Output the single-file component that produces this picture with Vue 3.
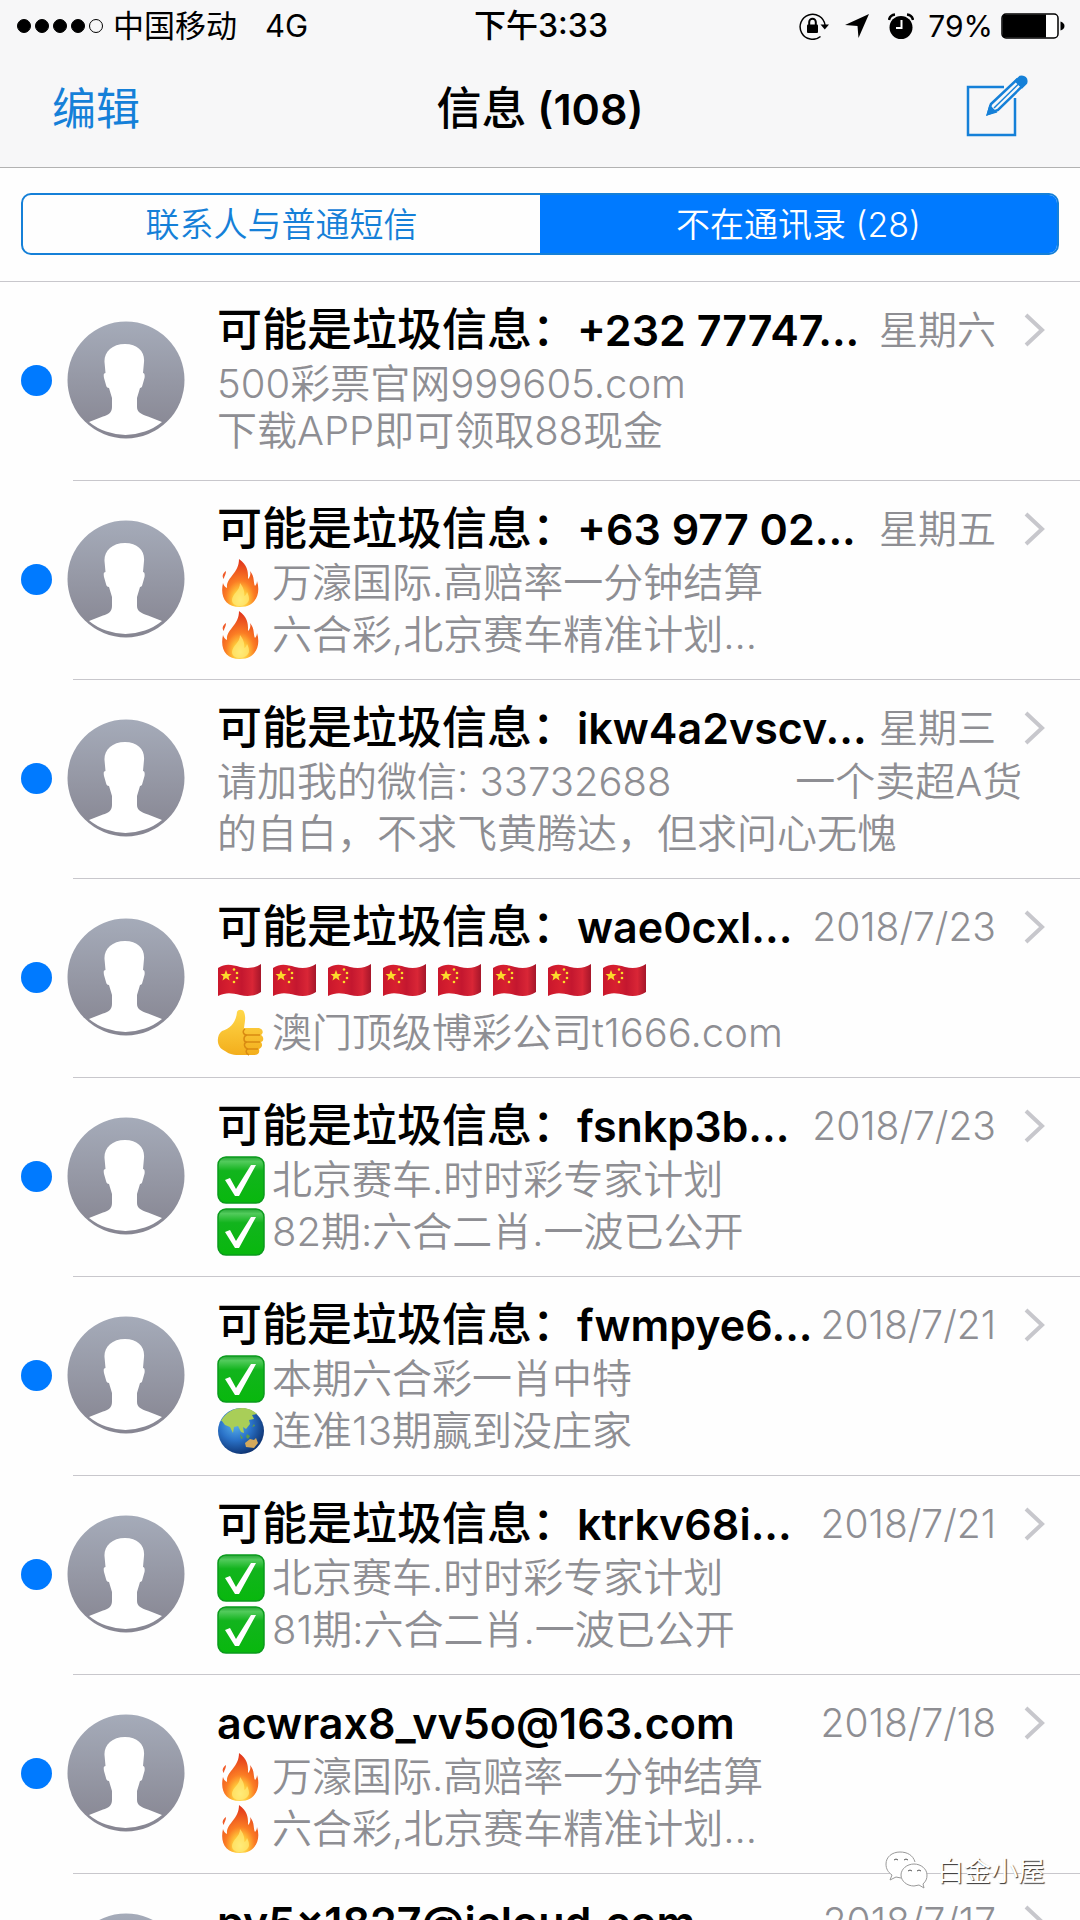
<template>
  <div class="phone">
    <header class="top">
      <div class="status">
        <div class="status-side">
          <span class="signal">
            <i v-for="n in 5" :key="n" class="signal-dot" :class="{ empty: n === 5 }"></i>
          </span>
          <span class="carrier">中国移动</span>
          <span>4G</span>
        </div>
        <time class="clock">下午3:33</time>
        <div class="status-side status-right">
          <svg class="ic-lock" viewBox="0 0 30 28">
            <path d="M21.500 24.500A12.500 12.500 0 1 1 26 13" fill="none" stroke="#000" stroke-width="1.500" />
            <path d="M21.500 12.500h8.500l-4.200 5z" />
            <rect x="8" y="12.500" width="11" height="8.500" rx="1" />
            <path d="M10.200 13v-3a3.300 3.300 0 0 1 6.600 0v3" fill="none" stroke="#000" stroke-width="2" />
          </svg>
          <svg class="ic-arrow" viewBox="0 0 24 24">
            <path d="M24 0L13.500 24L12.500 12L0 11z" />
          </svg>
          <svg class="ic-alarm" viewBox="0 0 26 26">
            <circle cx="13" cy="14.500" r="11.500" />
            <path d="M1 7Q2 2 7 1.500M25 7Q24 2 19 1.500" fill="none" stroke="#000" stroke-width="2.500" />
            <path d="M13.500 7v8H8" fill="none" stroke="#fff" stroke-width="2" />
          </svg>
          <span class="percent">79%</span>
          <svg class="ic-battery" viewBox="0 0 64 26">
            <rect x="1" y="1" width="56" height="24" rx="4" fill="#fff" stroke="#000" stroke-width="1.500" />
            <path d="M4 1.500h41v23H4q-2.500 0-2.500-2.500v-18q0-2.500 2.500-2.500z" />
            <path d="M59.500 8.500q4 1.500 4 4.500t-4 4.500z" />
          </svg>
        </div>
      </div>
      <nav class="nav">
        <button class="edit">编辑</button>
        <h1><span class="cjk">信息</span> (108)</h1>
        <button class="compose" aria-label="新信息">
          <svg viewBox="0 0 62 62">
            <path d="M38 12H2v48h47V23" />
            <path d="M22 39l3-10L51 4.500l6 6L32 35z" />
            <path d="M28 33L53 8.500" stroke-width="1.500" />
            <path d="M50 6l4-4q3-1 5 1t1 5l-4 4z" class="solid" />
            <path d="M22 39l2-7l5 5z" class="solid" />
          </svg>
        </button>
      </nav>
    </header>

    <div class="filter">
      <div class="segments">
        <button
          v-for="(tab, i) in tabs"
          :key="tab"
          class="segment"
          :class="{ active: i === activeTab }"
          @click="activeTab = i"
        >
          {{ tab }}
        </button>
      </div>
    </div>

    <ul class="list">
      <li v-for="msg in messages" :key="msg.from" class="row">
        <i class="unread"></i>
        <svg class="avatar" viewBox="0 0 118 118">
          <defs>
            <linearGradient id="avatar-fill" x1="0" y1="0" x2="0" y2="1">
              <stop offset="0" stop-color="#a5abb9" />
              <stop offset="1" stop-color="#868591" />
            </linearGradient>
          </defs>
          <circle cx="59" cy="59" r="58.500" fill="url(#avatar-fill)" />
          <path
            fill="#fff"
            d="M58 24c-13 0-21 8-20.500 18l1 11c-2 0-2 2-1.500 5l2 7q.5 3 3 3l3 10v9c0 6-4 8-9 9.500l-14 5.500a58 58 0 0 0 73 0l-14-5.500c-6-2-11-4-11-9.500v-9l3-10q2 0 2.500-3l2-7c.5-3 0-5-1.500-5l1-11c1-10-6-18-19-18z"
            transform="translate(0 -1)"
          />
        </svg>
        <div class="body">
          <div class="head">
            <h2 class="from"><span v-if="msg.spam" class="cjk">可能是垃圾信息：</span>{{ msg.from }}</h2>
            <time class="date">{{ msg.date }}</time>
            <svg class="chevron" viewBox="0 0 22 34">
              <path d="M2 2l16 15L2 32" />
            </svg>
          </div>
          <div class="preview" :class="{ tight: msg.tight }">
            <p v-for="(line, i) in msg.lines" :key="i">
              <span v-for="n in line.repeat || (line.icon ? 1 : 0)" :key="n" class="emoji">
                <svg v-if="line.icon === 'fire'" viewBox="0 0 48 48">
                  <defs>
                    <radialGradient id="fire-fill" cx=".5" cy=".85" r=".8">
                      <stop offset="0" stop-color="#fff58a" />
                      <stop offset=".25" stop-color="#ffc93a" />
                      <stop offset=".5" stop-color="#fb7d24" />
                      <stop offset="1" stop-color="#e2381c" />
                    </radialGradient>
                  </defs>
                  <path fill="url(#fire-fill)" d="M22 0c10 7 9 15 9 20 2-2 3-5 2-8 5 6 3 11 5 15 1-1 2-3 2-5 4 12-1 26-17 26C8 48 3 37 6 24c1 3 2 4 4 5-1-11 12-14 12-29z" />
                  <path fill="#f05a28" d="M9 12c-4 3-4 6-2 8 0-3 2-4 2-8z" />
                  <path fill="#ffe873" opacity=".75" d="M23 24c0 8-8 11-8 17 0 4 4 6 8 6s9-3 9-7c0-3-1-5-2-7-1 3-2 4-3 4 1-5-1-9-4-13z" />
                </svg>
                <svg v-else-if="line.icon === 'flag'" viewBox="0 0 48 48">
                  <defs>
                    <linearGradient id="flag-fill">
                      <stop offset="0" stop-color="#c9172c" />
                      <stop offset=".3" stop-color="#d8202f" />
                      <stop offset=".55" stop-color="#c4172f" />
                      <stop offset=".8" stop-color="#d92636" />
                      <stop offset="1" stop-color="#a5162a" />
                    </linearGradient>
                  </defs>
                  <path fill="url(#flag-fill)" d="M1 11c8-5 14-3 22-1s15 1 21-3v28c-6 4-13 5-21 3s-14-3-22 1z" />
                  <path fill="#fbdc2b" d="M9 13l1.500 4h4l-3 2.500 1 4L9 21l-3.500 2.500 1-4-3-2.500h4z" />
                  <g fill="#fbdc2b">
                    <circle cx="17" cy="12.500" r="1.300" />
                    <circle cx="20" cy="16" r="1.300" />
                    <circle cx="20" cy="21" r="1.300" />
                    <circle cx="17" cy="25" r="1.300" />
                  </g>
                </svg>
                <svg v-else-if="line.icon === 'thumb'" viewBox="0 0 48 48">
                  <defs>
                    <linearGradient id="thumb-fill" x1="0" y1="0" x2="0" y2="1">
                      <stop offset="0" stop-color="#ffd84a" />
                      <stop offset="1" stop-color="#f3ae1c" />
                    </linearGradient>
                  </defs>
                  <path fill="url(#thumb-fill)" d="M20 3c1-3 6-3 7 0 2 5 1 9 0 16h15c4 1 5 5 2 7 3 2 3 6 0 7 2 3 1 6-2 7 1 4-1 6-5 6H22c-8 0-11-2-14-4-9-3-9-16-3-20 9-3 14-9 15-19z" />
                  <path fill="none" stroke="#d98a12" stroke-width="1.500" d="M28 20c-3 2-2 6 2 6h13M30 26c-4 1-4 7 0 7h13M30 33c-4 1-3 6 1 7h10M31 40c-3 1-2 5 1 6" />
                </svg>
                <svg v-else-if="line.icon === 'check'" viewBox="0 0 48 48">
                  <defs>
                    <linearGradient id="check-fill" x1="0" y1="0" x2="0" y2="1">
                      <stop offset="0" stop-color="#27a536" />
                      <stop offset=".1" stop-color="#52cb5c" />
                      <stop offset=".3" stop-color="#12b41d" />
                      <stop offset="1" stop-color="#08b80d" />
                    </linearGradient>
                  </defs>
                  <rect x="1" y="1" width="46" height="46" rx="8" fill="url(#check-fill)" stroke="#0a9a1c" stroke-width="1.500" />
                  <path fill="#fff" d="M8 24l5-2 6 11L34 9h5L22 40h-4z" />
                </svg>
                <svg v-else viewBox="0 0 48 48">
                  <defs>
                    <radialGradient id="globe-fill" cx=".38" cy=".35" r=".7">
                      <stop offset="0" stop-color="#5bb4ee" />
                      <stop offset=".5" stop-color="#2a72c8" />
                      <stop offset="1" stop-color="#0c2f6c" />
                    </radialGradient>
                  </defs>
                  <circle cx="24" cy="24" r="23" fill="url(#globe-fill)" />
                  <path fill="#a9ce58" d="M4 14C9 5 17 1 25 1c7 0 12 3 15 6l-5 1 2 4-5 1 1 4-4 5-3-2 1 6-3-1-3-6-4 1-1 6-3-6-5-2-3-4z" />
                  <path fill="#5d9c4d" d="M23 27l3 4-2 1zM30 27l3 2-2 3-2-2zM35 20l2-3 1 2z" />
                  <path fill="#d4a95c" d="M28 36l5-4 4 1 2-2 2 5-4 5-8-1z" />
                </svg>
              </span>
              <span v-if="line.text">{{ line.text }}</span>
            </p>
          </div>
        </div>
      </li>
    </ul>

    <div class="watermark">
      <svg viewBox="0 0 44 38">
        <path d="M30 11C28 4 22 1 15 1 7 1 1 6 1 13c0 5 2 8 6 11l-2 5 6-3 5 1" />
        <path d="M42 24c0-6-6-11-13-11s-13 5-13 11 6 11 13 11l5-1 5 3-1-4c3-3 4-5 4-9z" />
        <path d="M9 9q2-2 4 0M19 9q2-2 4 0M23 20q2-2 4 0M32 20q2-2 4 0" class="eyes" />
      </svg>
      <span>白金小屋</span>
    </div>
  </div>
</template>

<script setup>
import { ref } from 'vue'

const tabs = ['联系人与普通短信', '不在通讯录 (28)']
const activeTab = ref(1)

const messages = [
  {
    spam: true,
    from: '+232 77747...',
    date: '星期六',
    tight: true,
    lines: [{ text: '500彩票官网999605.com' }, { text: '下载APP即可领取88现金' }]
  },
  {
    spam: true,
    from: '+63 977 02...',
    date: '星期五',
    lines: [
      { icon: 'fire', text: '万濠国际.高赔率一分钟结算' },
      { icon: 'fire', text: '六合彩,北京赛车精准计划...' }
    ]
  },
  {
    spam: true,
    from: 'ikw4a2vscv...',
    date: '星期三',
    lines: [
      { text: '请加我的微信: 33732688\u00a0\u00a0\u00a0\u00a0\u00a0\u00a0\u00a0\u00a0\u00a0\u00a0\u00a0一个卖超A货' },
      { text: '的自白，不求飞黄腾达，但求问心无愧' }
    ]
  },
  {
    spam: true,
    from: 'wae0cxl...',
    date: '2018/7/23',
    lines: [{ icon: 'flag', repeat: 8 }, { icon: 'thumb', text: '澳门顶级博彩公司t1666.com' }]
  },
  {
    spam: true,
    from: 'fsnkp3b...',
    date: '2018/7/23',
    lines: [
      { icon: 'check', text: '北京赛车.时时彩专家计划' },
      { icon: 'check', text: '82期:六合二肖.一波已公开' }
    ]
  },
  {
    spam: true,
    from: 'fwmpye6...',
    date: '2018/7/21',
    lines: [
      { icon: 'check', text: '本期六合彩一肖中特' },
      { icon: 'globe', text: '连准13期赢到没庄家' }
    ]
  },
  {
    spam: true,
    from: 'ktrkv68i...',
    date: '2018/7/21',
    lines: [
      { icon: 'check', text: '北京赛车.时时彩专家计划' },
      { icon: 'check', text: '81期:六合二肖.一波已公开' }
    ]
  },
  {
    from: 'acwrax8_vv5o@163.com',
    date: '2018/7/18',
    lines: [
      { icon: 'fire', text: '万濠国际.高赔率一分钟结算' },
      { icon: 'fire', text: '六合彩,北京赛车精准计划...' }
    ]
  },
  {
    from: 'py5x1827@icloud.com',
    date: '2018/7/17',
    lines: []
  }
]
</script>

<style>
body {
  margin: 0;
  background: #fff;
}
</style>

<style scoped>
.phone {
  position: relative;
  display: flex;
  flex-direction: column;
  height: 100vh;
  overflow: hidden;
  background: #fefefe;
  color: #000;
  font-family: Inter, "Noto Sans CJK SC", sans-serif;
}

button {
  padding: 0;
  border: 0;
  background: none;
  font: inherit;
  cursor: pointer;
}

h1,
h2,
p,
ul {
  margin: 0;
  padding: 0;
}

svg {
  display: block;
  flex: none;
}

.top {
  flex: none;
  border-bottom: 1px solid #b2b2b2;
  background: #f7f7f8;
}

.status {
  display: grid;
  grid-template-columns: 1fr auto 1fr;
  align-items: center;
  height: 52px;
  padding: 0 15px 0 17px;
  font-size: 31px;
  line-height: 40px;
}

.status-side {
  display: flex;
  align-items: center;
}

.status-right {
  justify-content: flex-end;
}

.signal {
  display: flex;
  gap: 4px;
  margin-right: 10px;
}

.signal-dot {
  box-sizing: border-box;
  width: 14px;
  height: 14px;
  border: 1px solid #000;
  border-radius: 50%;
  background: #000;
}

.signal-dot.empty {
  background: none;
}

.carrier {
  margin-right: 28px;
}

.clock {
  font-size: 32px;
  font-weight: 500;
}

.ic-lock {
  width: 30px;
  height: 28px;
  margin-right: 16px;
}

.ic-arrow {
  width: 24px;
  height: 24px;
  margin-right: 19px;
}

.ic-alarm {
  width: 26px;
  height: 26px;
  margin-right: 14px;
}

.percent {
  margin-right: 8px;
  font-size: 30px;
}

.ic-battery {
  width: 64px;
  height: 26px;
}

.nav {
  display: grid;
  grid-template-columns: 1fr auto 1fr;
  align-items: center;
  height: 115px;
  padding: 0 52px 8px;
  box-sizing: border-box;
}

.nav h1 {
  font-size: 43px;
  font-weight: 600;
}

.cjk {
  font-size: 45px;
  font-weight: 500;
}

.edit,
.compose {
  color: #1580d8;
}

.edit {
  justify-self: start;
  font-size: 44px;
}

.compose {
  justify-self: end;
}

.compose svg {
  width: 62px;
  height: 62px;
  fill: none;
  stroke: currentColor;
  stroke-width: 2.5;
}

.compose .solid {
  fill: currentColor;
}

.filter {
  flex: none;
  padding: 25px 21px 26px;
  border-bottom: 1px solid #c8c7cc;
}

.segments {
  display: flex;
  height: 62px;
  box-sizing: border-box;
  border: 2px solid #1580d8;
  border-radius: 10px;
  overflow: hidden;
}

.segment {
  flex: 1;
  padding-bottom: 4px;
  color: #1580d8;
  font-size: 34px;
  font-weight: 350;
}

.segment.active {
  background: #007aff;
  color: #fff;
}

.list {
  flex: 1;
  min-height: 0;
  overflow: hidden;
  list-style: none;
}

.row {
  display: flex;
  height: 199px;
  box-sizing: border-box;
  padding: 22px 34px 0 21px;
  background: linear-gradient(#c8c7cc, #c8c7cc) 73px 100% / 100% 1px no-repeat;
}

.unread {
  flex: none;
  width: 31px;
  height: 31px;
  margin: 61px 15px 0 0;
  border-radius: 50%;
  background: #007aff;
}

.avatar {
  width: 118px;
  height: 118px;
  margin: 17px 32px 0 0;
}

.body {
  flex: 1;
  min-width: 0;
}

.head {
  display: flex;
  align-items: center;
  height: 52px;
}

.from {
  flex: 1;
  min-width: 0;
  font-size: 43px;
  font-weight: 600;
  line-height: 52px;
  white-space: nowrap;
}

.date {
  color: #8e8e93;
  font-size: 39px;
  font-weight: 350;
  line-height: 52px;
  white-space: nowrap;
}

.chevron {
  width: 22px;
  height: 34px;
  margin-left: 28px;
  fill: none;
  stroke: #c7c7cc;
  stroke-width: 4;
}

.preview {
  padding-top: 2px;
  color: #8e8e93;
  font-size: 40px;
  font-weight: 350;
  line-height: 52px;
}

.preview.tight {
  padding-top: 4px;
  line-height: 47px;
}

.preview p {
  display: flex;
  align-items: center;
  white-space: nowrap;
}

.emoji {
  display: flex;
  align-items: center;
  width: 55px;
  height: 52px;
}

.emoji svg {
  width: 48px;
  height: 48px;
}

.watermark {
  position: absolute;
  right: 35px;
  bottom: 31px;
  display: flex;
  align-items: center;
  gap: 8px;
  color: #fff;
  font-size: 27px;
  text-shadow: 1px 1px 1px #333;
}

.watermark svg {
  width: 44px;
  height: 38px;
  fill: #fff;
  stroke: #999;
  stroke-width: 1;
}

.watermark .eyes {
  fill: none;
  stroke: #555;
}
</style>
